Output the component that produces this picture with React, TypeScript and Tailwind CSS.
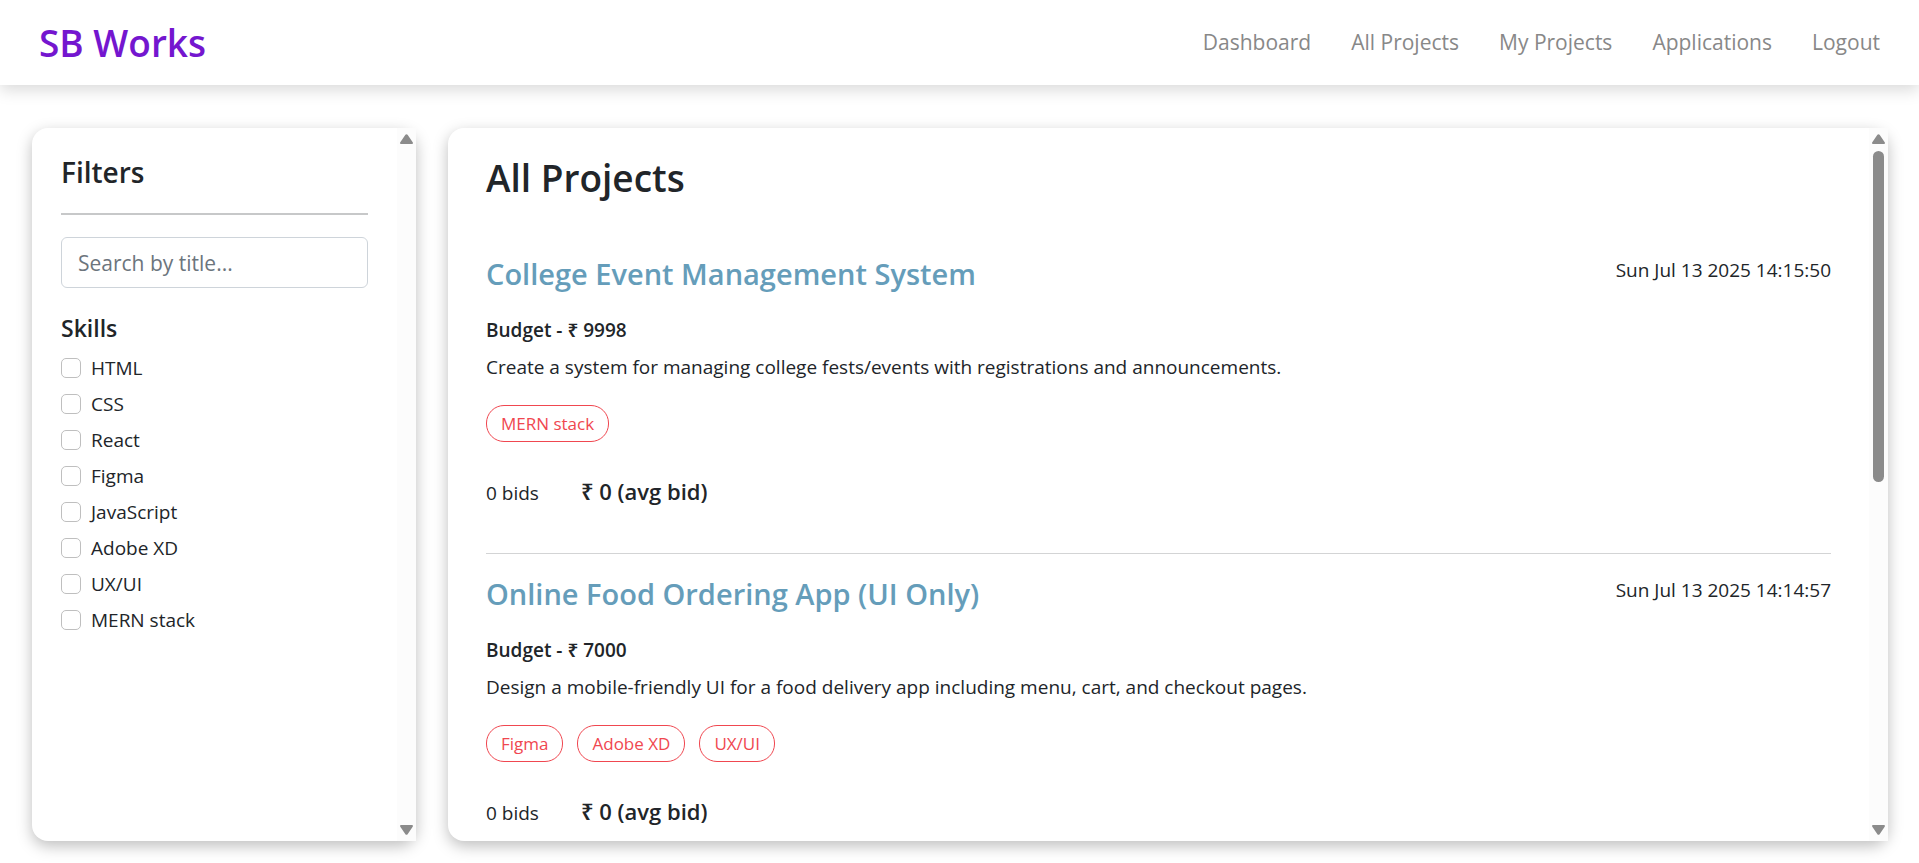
import React from "react";

const navLinks = ["Dashboard", "All Projects", "My Projects", "Applications", "Logout"];

const skillOptions = ["HTML", "CSS", "React", "Figma", "JavaScript", "Adobe XD", "UX/UI", "MERN stack"];

interface Project {
  title: string;
  posted: string;
  budget: number;
  description: string;
  skills: string[];
  bids: number;
  avgBid: number;
}

const projects: Project[] = [
  {
    title: "College Event Management System",
    posted: "Sun Jul 13 2025 14:15:50",
    budget: 9998,
    description: "Create a system for managing college fests/events with registrations and announcements.",
    skills: ["MERN stack"],
    bids: 0,
    avgBid: 0,
  },
  {
    title: "Online Food Ordering App (UI Only)",
    posted: "Sun Jul 13 2025 14:14:57",
    budget: 7000,
    description: "Design a mobile-friendly UI for a food delivery app including menu, cart, and checkout pages.",
    skills: ["Figma", "Adobe XD", "UX/UI"],
    bids: 0,
    avgBid: 0,
  },
];

function ScrollArrow({ down = false }: { down?: boolean }) {
  return (
    <svg viewBox="0 0 13 10" className="h-[10px] w-[13px] shrink-0" fill="#8b8b8b" aria-hidden="true">
      {down ? (
        <path d="M1.2 0h10.6c1 0 1.5 1 .9 1.8L7.6 9.2c-.6.8-1.6.8-2.2 0L.3 1.8C-.3 1 .2 0 1.2 0z" />
      ) : (
        <path d="M1.2 10h10.6c1 0 1.5-1 .9-1.8L7.6.8C7 0 6 0 5.4.8L.3 8.2C-.3 9 .2 10 1.2 10z" />
      )}
    </svg>
  );
}

function ScrollTrack({ thumb = false }: { thumb?: boolean }) {
  return (
    <div className="flex w-[19px] shrink-0 flex-col items-center bg-[#fcfcfc] py-[6px]" aria-hidden="true">
      <ScrollArrow />
      <div className="my-[7px] w-[11px] flex-1">
        {thumb && <div className="h-[331px] w-full rounded-full bg-[#8b8b8b]" />}
      </div>
      <ScrollArrow down />
    </div>
  );
}

function Panel({ thumb, className, children }: { thumb?: boolean; className: string; children: React.ReactNode }) {
  return (
    <div className={`flex min-h-0 rounded-2xl bg-white shadow-[0_5px_15px_rgba(0,0,0,0.26)] ${className}`}>
      <div className="min-w-0 flex-1 overflow-y-auto rounded-l-2xl [scrollbar-width:none]">{children}</div>
      <ScrollTrack thumb={thumb} />
    </div>
  );
}

function ProjectItem({ project }: { project: Project }) {
  return (
    <article className="border-b border-[#d3d4d5] pt-[22px] pb-[50px] first:pt-0 last:border-b-0">
      <div className="flex items-start justify-between">
        <h2 className="text-[29px] leading-9 font-semibold text-[#659dba]">{project.title}</h2>
        <time className="text-[19px] leading-7">{project.posted}</time>
      </div>
      <p className="mt-[26px] text-[19px] leading-6 font-semibold">Budget - ₹ {project.budget}</p>
      <p className="mt-[13px] text-[19px] leading-6">{project.description}</p>
      <ul className="mt-[26px] flex gap-[14px]">
        {project.skills.map((skill) => (
          <li
            key={skill}
            className="flex h-[37px] items-center rounded-[18px] border border-[#f04750] px-[14px] text-[17px] text-[#f04750]"
          >
            {skill}
          </li>
        ))}
      </ul>
      <div className="mt-[37px] flex h-6 items-baseline gap-[42px] leading-6">
        <p className="text-[19px]">{project.bids} bids</p>
        <p className="text-[22px] font-semibold">₹ {project.avgBid} (avg bid)</p>
      </div>
    </article>
  );
}

export default function App() {
  return (
    <div className="flex h-screen flex-col bg-white font-['Open_Sans','Noto_Sans',sans-serif] text-[#212529]">
      <header className="flex h-[85px] shrink-0 items-center justify-between px-[39px] shadow-[0_5px_15px_rgba(0,0,0,0.15)]">
        <h1 className="text-[37px] font-semibold text-[#7416cf]">SB Works</h1>
        <nav className="flex gap-10 text-[21px] text-[#888888]">
          {navLinks.map((link) => (
            <a key={link} href="#">
              {link}
            </a>
          ))}
        </nav>
      </header>

      <main className="flex min-h-0 flex-1 gap-8 pt-[43px] pr-[31px] pb-[22px] pl-8">
        <Panel className="w-96 shrink-0">
          <aside className="px-[29px] pt-[26px]">
            <h2 className="text-[28px] leading-9 font-semibold">Filters</h2>
            <hr className="mt-[23px] border-t-2 border-[#c7c8c9]" />
            <input
              type="text"
              aria-label="Search by title"
              placeholder="Search by title..."
              className="mt-[22px] h-[51px] w-full rounded-md border border-[#ced4da] px-4 text-[21px] placeholder:text-[#6c757d]"
            />
            <h3 className="mt-[26px] text-[23px] leading-7 font-semibold">Skills</h3>
            <div className="mt-[14px] flex flex-col gap-3">
              {skillOptions.map((skill) => (
                <label key={skill} className="flex h-6 items-center gap-[10px] text-[19px]">
                  <input
                    type="checkbox"
                    className="size-5 appearance-none rounded-[5px] border border-[#bfbfbf] bg-white checked:bg-[#0d6efd]"
                  />
                  {skill}
                </label>
              ))}
            </div>
          </aside>
        </Panel>

        <Panel className="flex-1" thumb>
          <section className="px-[38px] pt-[26px]">
            <h1 className="text-[37px] leading-[48px] font-semibold">All Projects</h1>
            <div className="mt-[54px]">
              {projects.map((project) => (
                <ProjectItem key={project.title} project={project} />
              ))}
            </div>
          </section>
        </Panel>
      </main>
    </div>
  );
}
